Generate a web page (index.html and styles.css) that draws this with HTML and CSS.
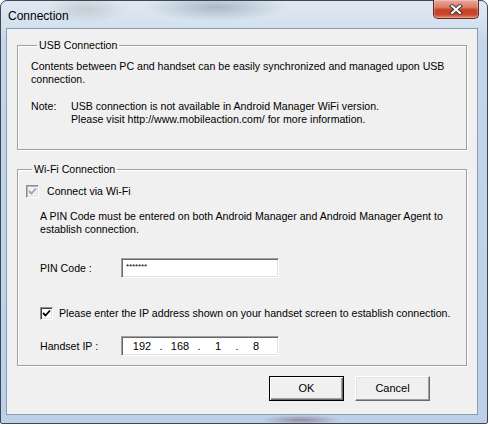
FILE: index.html
```html
<!DOCTYPE html>
<html lang="en">
<head>
    <meta charset="UTF-8">
    <meta name="viewport" content="width=device-width, initial-scale=1.0">
    <title>Connection</title>
    <link rel="stylesheet" href="styles.css">
</head>
<body>
    <div class="window">
        <div class="titlebar">
            <span class="title">Connection</span>
            <button class="close" aria-label="Close">
                <svg width="14" height="11" viewBox="0 0 14 11"><path d="M3 2 L11 9 M11 2 L3 9" stroke="#3b3b3b" stroke-width="4" stroke-linecap="square"/><path d="M3 2 L11 9 M11 2 L3 9" stroke="#fff" stroke-width="2" stroke-linecap="square"/></svg>
            </button>
        </div>
        <div class="client">
            <fieldset class="group usb">
                <legend>USB Connection</legend>
                <p>Contents between PC and handset can be easily synchronized and managed upon USB<br>connection.</p>
                <div class="note">
                    <span class="note-label">Note:</span>
                    <p>USB connection is not available in Android Manager WiFi version.<br>Please visit http://www.mobileaction.com/ for more information.</p>
                </div>
            </fieldset>

            <fieldset class="group wifi">
                <legend>Wi-Fi Connection</legend>
                <label class="check check-wifi disabled">
                    <span class="box"><svg width="9" height="9" viewBox="0 0 9 9"><path d="M1 4 L3.5 6.5 L8 1.5" fill="none" stroke="#a3a3a3" stroke-width="1.8"/></svg></span>
                    Connect via Wi-Fi
                </label>
                <p class="pin-info">A PIN Code must be entered on both Android Manager and Android Manager Agent to<br>establish connection.</p>
                <div class="field-row pin-row">
                    <span class="field-label">PIN Code :</span>
                    <div class="textbox"><span class="stars">*******</span></div>
                </div>
                <label class="check check-ip">
                    <span class="box"><svg width="9" height="9" viewBox="0 0 9 9"><path d="M1 4 L3.5 6.5 L8 1.5" fill="none" stroke="#000" stroke-width="1.8"/></svg></span>
                    Please enter the IP address shown on your handset screen to establish connection.
                </label>
                <div class="field-row ip-row">
                    <span class="field-label">Handset IP :</span>
                    <div class="textbox ip">
                        <span class="octet">192</span><span class="dot">.</span>
                        <span class="octet">168</span><span class="dot">.</span>
                        <span class="octet">1</span><span class="dot">.</span>
                        <span class="octet">8</span>
                    </div>
                </div>
            </fieldset>

            <div class="buttons">
                <button class="btn default">OK</button>
                <button class="btn">Cancel</button>
            </div>
        </div>
    </div>
</body>
</html>
```

FILE: styles.css
```css
body { margin: 0; background: #fff; font-family: "Liberation Sans", Arial, sans-serif; font-size: 10.6px; line-height: 13px; color: #000; }
p { margin: 0; }

.window { width: 488px; height: 424px; box-sizing: border-box; border: 1px solid #3d4654; border-radius: 7px 7px 2px 2px; display: flex; flex-direction: column;
    background:
        radial-gradient(ellipse 40px 14px at 85px 8px, rgba(170,175,180,.45), transparent),
        radial-gradient(ellipse 70px 14px at 215px 6px, rgba(110,130,150,.45), transparent),
        radial-gradient(ellipse 40px 5px at 300px 419px, rgba(120,80,110,.55), transparent),
        linear-gradient(180deg, #dfe8f1 0, #d4e1ee 24px, #c3d6ea 40px, #bcd1e8 100%); }

.titlebar { height: 27px; display: flex; justify-content: space-between; align-items: flex-start; }
.title { font-size: 12px; line-height: 14px; margin: 8px 0 0 7px; color: #000; }
.close { width: 46px; height: 19px; margin: -1px 8px 0 0; padding: 0; border: 1px solid #5e2a22; border-top: 0; border-radius: 0 0 5px 5px; display: flex; align-items: center; justify-content: center;
    background: linear-gradient(180deg, #e9aa9d 0, #dc7b67 40%, #c7412a 55%, #c9472f 80%, #e48a70 100%); box-shadow: inset 0 0 0 1px rgba(255,255,255,.25); }

.client { flex: 1; margin: 0 9px 8px 5px; border: 1px solid #8a9bb3; background: #f0f0f0; display: flex; flex-direction: column; }

.group { margin: 10px 10px 0; width: 450px; box-sizing: border-box; padding: 0; border: 1px solid #a0a0a0; box-shadow: inset 1px 1px #fff, 1px 1px #fff; }
.group legend { margin-left: 6px; padding: 0 2px; line-height: 13px; }

.usb { padding: 8px 0 23px 13px; }
.note { display: flex; margin-top: 14px; }
.note-label { width: 40px; }

.wifi { margin-top: 13px; padding: 9px 0 9px 8px; }
.check { display: flex; align-items: center; height: 13px; }
.box { width: 13px; height: 13px; box-sizing: border-box; display: flex; align-items: center; justify-content: center; background: #fff; border: 1px solid; border-color: #8e8f8f #fff #fff #8e8f8f; box-shadow: inset 1px 1px #404040, inset -1px -1px #e3e3e3; }
.check-wifi .box { margin-right: 8px; }
.disabled .box { background: #f0f0f0; box-shadow: inset 1px 1px #b5b5b5, inset -1px -1px #e3e3e3; }
.pin-info { margin: 12px 0 0 14px; }

.field-row { display: flex; align-items: center; margin-left: 14px; }
.field-label { width: 81px; }
.pin-row { margin-top: 22px; }
.textbox { width: 158px; height: 20px; box-sizing: border-box; background: #fff; border: 1px solid; border-color: #a0a0a0 #fff #fff #a0a0a0; box-shadow: inset 1px 1px #696969, inset -1px -1px #e3e3e3; padding-left: 4px; }
.stars { font-size: 8px; line-height: 12px; letter-spacing: -0.1px; }

.check-ip { margin: 29px 0 0 14px; }
.check-ip .box { margin-right: 6px; }

.ip-row { margin-top: 16px; }
.ip { display: flex; align-items: center; padding-left: 5px; font-size: 11px; }
.octet { width: 30px; text-align: center; }
.dot { width: 8px; text-align: center; }

.buttons { display: flex; justify-content: flex-end; gap: 11px; margin-top: 10px; padding-right: 47px; }
.btn { width: 75px; height: 25px; padding: 0; font: inherit; font-size: 11px; background: #f0f0f0; border: 1px solid; border-color: #fff #696969 #696969 #fff; box-shadow: inset -1px -1px #a0a0a0, inset 1px 1px #e3e3e3; }
.btn.default { border: 1px solid #000; box-shadow: inset 1px 1px #fff, inset -1px -1px #696969, inset -2px -2px #a0a0a0; }
```
